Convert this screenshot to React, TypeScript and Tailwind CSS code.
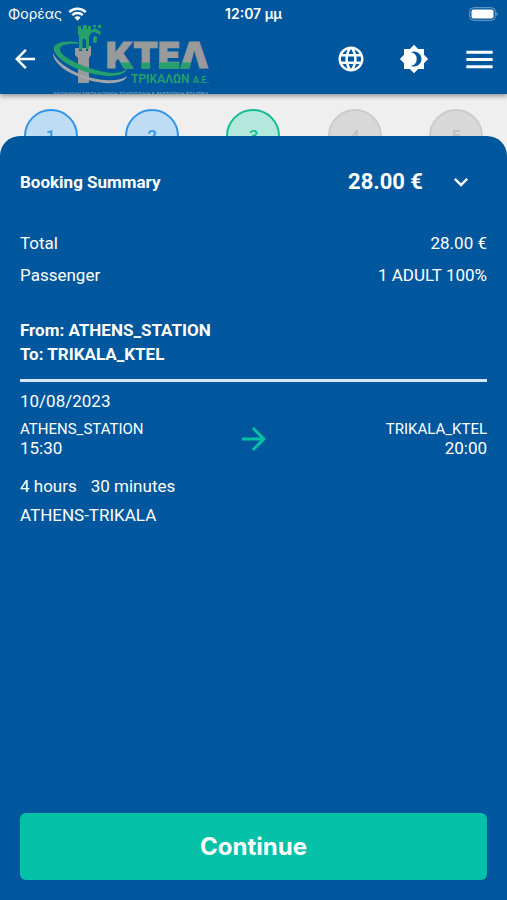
import React from "react";
import { MdArrowBack, MdArrowForward, MdKeyboardArrowDown, MdLanguage, MdMenu } from "react-icons/md";

const steps = [
  { n: 1, circle: "border-[#2f95e8] bg-[#bfdcf5] text-[#2f95e8]" },
  { n: 2, circle: "border-[#2f95e8] bg-[#bfdcf5] text-[#2f95e8]" },
  { n: 3, circle: "border-[#12bd93] bg-[#b5e8dc] text-[#12bd93]" },
  { n: 4, circle: "border-[#cbcbcb] bg-[#d8d8d8] text-[#c0c0c0]" },
  { n: 5, circle: "border-[#cbcbcb] bg-[#d8d8d8] text-[#c0c0c0]" },
];

function Wifi() {
  return (
    <svg viewBox="0 0 20 15" className="h-[14px] w-[19px]" aria-label="Wi-Fi">
      <g fill="none" stroke="#fff" strokeWidth="2.7">
        <path d="M1.2 5.4a12.6 12.6 0 0 1 17.6 0" />
        <path d="M4.4 8.7a8 8 0 0 1 11.2 0" />
      </g>
      <path d="M10 14.6 6.7 11.2a4.7 4.7 0 0 1 6.6 0z" fill="#fff" />
    </svg>
  );
}

function Battery() {
  return (
    <svg viewBox="0 0 30 14" className="h-[14px] w-[30px]" aria-label="Battery full">
      <rect x=".7" y=".7" width="25.6" height="12.6" rx="4" fill="none" stroke="#fff" strokeOpacity=".45" />
      <rect x="2.5" y="2.5" width="22" height="9" rx="2" fill="#fff" />
      <path d="M27.5 4.7q2.4 2.3 0 4.6z" fill="#fff" fillOpacity=".5" />
    </svg>
  );
}

function ThemeIcon() {
  return (
    <svg viewBox="0 0 24 24" className="size-[30px]" fill="#fff" fillRule="evenodd">
      <path d="M20 8.69V4h-4.69L12 .69 8.69 4H4v4.69L.69 12 4 15.31V20h4.69L12 23.31 15.31 20H20v-4.69L23.31 12zM9.6 6.5A6 6 0 1 1 9.6 17.5 A5.6 5.6 0 0 0 9.6 6.5z" />
    </svg>
  );
}

function Logo() {
  return (
    <svg viewBox="0 0 160 70" className="h-[70px] w-[160px] shrink-0" role="img" aria-label="ΚΤΕΛ Τρικάλων Α.Ε.">
      <defs>
        <clipPath id="lower">
          <path d="M66 38.500h75l-3 8H71z" />
        </clipPath>
      </defs>
      {/* tower */}
      <path d="M23 24h4v3h3v-3h4v3h2v-5h3v9l-2 3v25H26V34l-3-3z" fill="#999a9c" />
      <path d="M26 2h3v3h2V1h4v4h1V2h3v8l-2 2v13h-3v-9q-2.500-3-3.500 0v10H27V12l-1-2z" fill="#25a06b" />
      <path d="m38 7 5-3 6 4-1 3-6-3-4 1zM41 1h3v2h-3zM46 1h3v3h-3zM41 14q4-5 4 1t-4 3z" fill="#25a06b" />
      {/* road loops */}
      <path d="M26 18C12 16 0 19 2 26c3 12 31 25 55 26 10 0 17-3 18-7-5 4-14 5-23 3C30 43 9 33 8 26c-1-5 7-7 18-6z" fill="#25a06b" />
      <path d="M1 29c0 13 24 27 51 30 13 1 22-2 23-7-5 4-13 5-23 4C29 54 6 41 1 29z" fill="#a2a5aa" />
      <g fontFamily="Inter, 'Liberation Sans', sans-serif" fontWeight="900" fontSize="36" strokeWidth="1">
        <text x="54" y="44" fill="#999a9c" stroke="#999a9c">ΚΤΕΛ</text>
        <text x="54" y="44" fill="#25a06b" stroke="#25a06b" clipPath="url(#lower)">ΚΤΕΛ</text>
      </g>
      <g fontFamily="Roboto, 'Liberation Sans', sans-serif" fontWeight="600" fill="#25a06b">
        <text x="79" y="59" fontSize="12">ΤΡΙΚΑΛΩΝ</text>
        <text x="141" y="59" fontSize="9">Α.Ε.</text>
      </g>
      <text x="1" y="72" fontFamily="Inter, 'Liberation Sans', sans-serif" fontSize="5.25" fill="#8ba9c6">ΑΝΩΝΥΜΗ ΜΕΤΑΦΟΡΙΚΗ ΤΟΥΡΙΣΤΙΚΗ &amp; ΕΜΠΟΡΙΚΗ ΕΤΑΙΡΕΙΑ</text>
    </svg>
  );
}

export default function App() {
  return (
    <div className="flex min-h-screen flex-col bg-[#efefef] font-[Roboto,'Liberation_Sans',sans-serif] text-[17px] leading-6 text-white">
      <header className="relative z-10 bg-[#00579d] shadow-[0_2px_5px_rgba(0,0,0,0.4)]">
        <div className="grid h-6 grid-cols-3 items-end px-2 font-[Inter,'Liberation_Sans',sans-serif] text-sm leading-5">
          <div className="flex items-center gap-1.5"><span>Φορέας</span><Wifi /></div>
          <span className="text-center font-semibold">12:07 μμ</span>
          <div className="flex h-5 items-center justify-end"><Battery /></div>
        </div>
        <div className="flex h-[70px] items-center px-2.5">
          <button aria-label="Back"><MdArrowBack size={30} /></button>
          <div className="ml-3"><Logo /></div>
          <nav className="ml-auto flex items-center gap-[33px]">
            <button aria-label="Language"><MdLanguage size={30} /></button>
            <button aria-label="Theme"><ThemeIcon /></button>
            <button aria-label="Menu"><MdMenu size={35} /></button>
          </nav>
        </div>
      </header>

      <ol className="grid grid-cols-5 pt-[15px]">
        {steps.map((s) => (
          <li key={s.n} className="flex justify-center">
            <span className={"flex size-[54px] items-center justify-center rounded-full border-2 font-medium " + s.circle}>{s.n}</span>
          </li>
        ))}
      </ol>

      <main className="relative -mt-[27px] flex flex-1 flex-col rounded-t-[20px] bg-[#00579d] px-5 pt-[30px] pb-5">
        <div className="flex items-center font-bold">
          <h1>Booking Summary</h1>
          <span className="ml-auto text-[22px] leading-8">28.00 €</span>
          <button aria-label="Collapse summary" className="mr-3 ml-6"><MdKeyboardArrowDown size={28} /></button>
        </div>

        <dl className="mt-[33px] flex flex-col gap-2">
          <div className="flex justify-between"><dt>Total</dt><dd>28.00 €</dd></div>
          <div className="flex justify-between"><dt>Passenger</dt><dd>1 ADULT 100%</dd></div>
        </dl>

        <div className="mt-[31px] border-b-[3px] border-[#d3e9fb] pb-[13px] font-bold">
          <p>From: ATHENS_STATION</p>
          <p>To: TRIKALA_KTEL</p>
        </div>

        <p className="mt-[7px]">10/08/2023</p>
        <div className="mt-[7px] grid grid-cols-[1fr_auto_1fr] items-center leading-[19px]">
          <div><p className="text-[15px]">ATHENS_STATION</p><p>15:30</p></div>
          <MdArrowForward size={36} className="text-[#04c1a7]" />
          <div className="text-right"><p className="text-[15px]">TRIKALA_KTEL</p><p>20:00</p></div>
        </div>
        <p className="mt-4 flex gap-[14px]"><span>4 hours</span><span>30 minutes</span></p>
        <p className="mt-[5px]">ATHENS-TRIKALA</p>

        <button className="mt-auto h-[67px] rounded-md bg-[#04c1a7] font-[Inter,'Liberation_Sans',sans-serif] text-2xl font-bold">Continue</button>
      </main>
    </div>
  );
}
